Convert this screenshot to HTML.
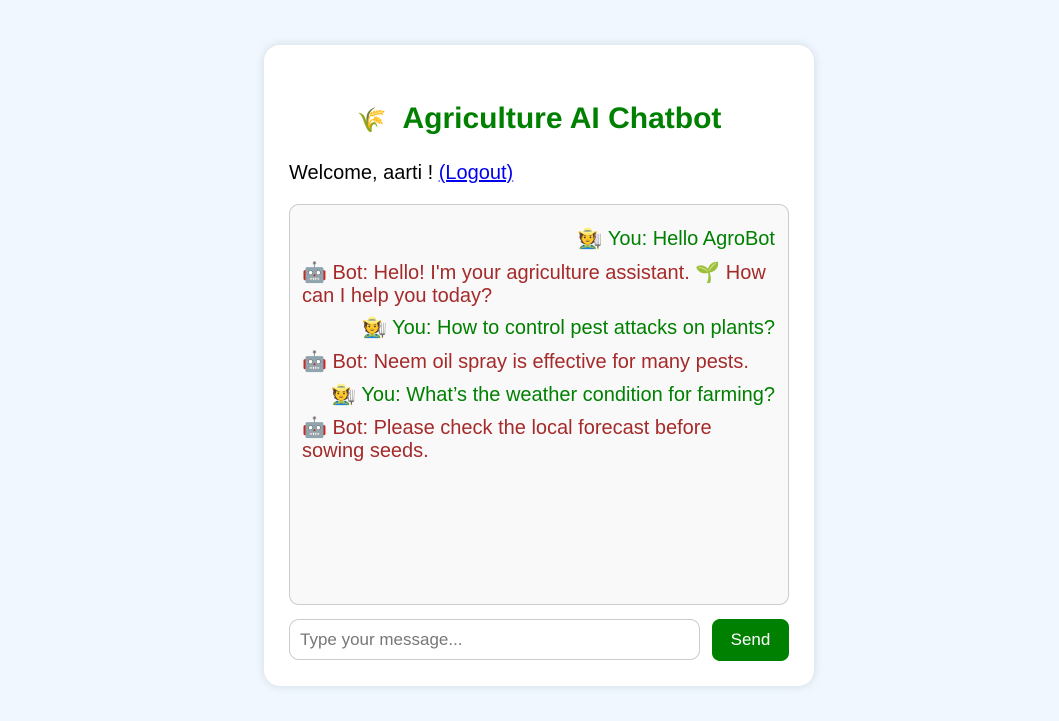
<!DOCTYPE html>
<html><head><meta charset="utf-8"><style>
html,body{margin:0;padding:0}
body{width:1059px;height:721px;background:#f0f7ff;font-family:"Liberation Sans",Arial,sans-serif;position:relative;overflow:hidden}
.card{position:absolute;left:264px;top:45px;width:550px;height:641px;background:#fff;border-radius:16px;box-shadow:0 0 10px rgba(0,0,0,0.12)}
h1{position:absolute;left:0;right:0;margin:0;text-align:center;color:#008000;font-size:30px;font-weight:bold;line-height:38px}
h1 .e{font-size:24px;margin-right:16px;color:#c8a030}
.wel{position:absolute;left:25px;font-size:20px;line-height:24px;color:#000}
.wel a{color:#0000ee;text-decoration:underline}
.chat{position:absolute;left:25px;top:159px;width:498px;height:399px;border:1px solid #ccc;border-radius:10px;background:#f9f9f9;padding:0}
.m{position:absolute;left:12px;right:13px;font-size:20px;line-height:23px}
.u{text-align:right;color:#008000}
.b{color:#a52a2a}
.inp{position:absolute;left:25px;top:574px;width:411px;height:41px;border:1px solid #ccc;border-radius:10px;box-sizing:border-box;font-size:17px;color:#777;padding:10px 10px;line-height:20px}
.btn{position:absolute;left:448px;top:574px;width:77px;height:42px;background:#008000;border-radius:8px;color:#fff;font-size:17px;text-align:center;line-height:42px}
</style></head><body>
<div class="card">
<h1 style="top:55px"><span class="e">🌾</span>Agriculture AI Chatbot</h1>
<div class="wel" style="top:116px">Welcome, aarti ! <a>(Logout)</a></div>
<div class="chat">
<div class="m u" style="top:23px">🧑‍🌾 You: Hello AgroBot</div>
<div class="m b" style="top:57px">🤖 Bot: Hello! I'm your agriculture assistant. 🌱 How can I help you today?</div>
<div class="m u" style="top:112px">🧑‍🌾 You: How to control pest attacks on plants?</div>
<div class="m b" style="top:146px">🤖 Bot: Neem oil spray is effective for many pests.</div>
<div class="m u" style="top:179px">🧑‍🌾 You: What’s the weather condition for farming?</div>
<div class="m b" style="top:212px">🤖 Bot: Please check the local forecast before sowing seeds.</div>
</div>
<div class="inp">Type your message...</div>
<div class="btn">Send</div>
</div>
</body></html>
